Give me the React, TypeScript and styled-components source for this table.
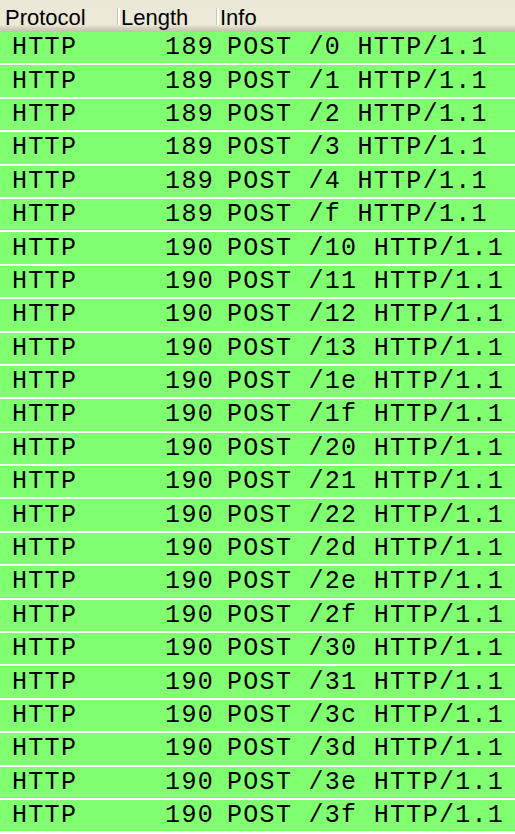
import { FC } from 'react'

import styled, { createGlobalStyle } from 'styled-components'

const GlobalStyle = createGlobalStyle`
	html, body {
		margin: 0;
		padding: 0;
		background: #ffffff;
	}
	body {
		width: 515px;
		height: 834px;
		overflow: hidden;
	}
`

const COLUMNS = '117px 99px 1fr'

const PacketList = styled.div`
	width: 515px;
	display: flex;
	flex-direction: column;
`

const HeaderRow = styled.div`
	display: grid;
	grid-template-columns: ${COLUMNS};
	height: 32px;
	background: linear-gradient(
		to bottom,
		#ebe8d8 0px,
		#ece9d8 25px,
		#dcd8c6 27px,
		#d1cdbb 29px,
		#c7c3b1 31px,
		#c7c3b1 32px
	);
`

const HeaderCell = styled.div<{ $divider?: boolean }>`
	position: relative;
	padding: 7px 0 0 ${(p) => (p.$divider ? 4 : 5)}px;
	font-family: 'Liberation Sans', Arial, sans-serif;
	font-size: 22px;
	line-height: 22px;
	color: #000;
	&::before {
		content: '';
		display: ${(p) => (p.$divider ? 'block' : 'none')};
		position: absolute;
		left: 0;
		top: 8px;
		width: 1px;
		height: 17px;
		background: #c9c6b6;
		border-right: 2px solid #ffffff;
	}
`

const Row = styled.div`
	display: grid;
	grid-template-columns: ${COLUMNS};
	align-items: center;
	height: 31.4px;
	border-bottom: 2px solid #ffffff;
	background: #80ff70;
	font-family: 'Liberation Mono', 'Courier New', monospace;
	font-size: 25px;
	letter-spacing: 1.3px;
	color: #000;
	white-space: pre;
`

const Cell = styled.div<{ $align?: 'left' | 'right'; $pad: number }>`
	text-align: ${(p) => p.$align || 'left'};
	padding: ${(p) => (p.$align === 'right' ? `0 ${p.$pad}px 0 0` : `0 0 0 ${p.$pad}px`)};
	overflow: hidden;
`

const paths = [
	'0', '1', '2', '3', '4', 'f', '10', '11', '12', '13', '1e', '1f',
	'20', '21', '22', '2d', '2e', '2f', '30', '31', '3c', '3d', '3e', '3f',
]

const packets = paths.map((p) => ({
	protocol: 'HTTP',
	length: p.length === 1 ? 189 : 190,
	info: `POST /${p} HTTP/1.1`,
}))

const App: FC = () => {
	return (
		<>
			<GlobalStyle />
			<PacketList>
				<HeaderRow>
					<HeaderCell>Protocol</HeaderCell>
					<HeaderCell $divider>Length</HeaderCell>
					<HeaderCell $divider>Info</HeaderCell>
				</HeaderRow>
				{packets.map((pkt, i) => (
					<Row key={i}>
						<Cell $pad={12}>{pkt.protocol}</Cell>
						<Cell $align="right" $pad={2}>
							{pkt.length}
						</Cell>
						<Cell $pad={11}>{pkt.info}</Cell>
					</Row>
				))}
			</PacketList>
		</>
	)
}

export default App
